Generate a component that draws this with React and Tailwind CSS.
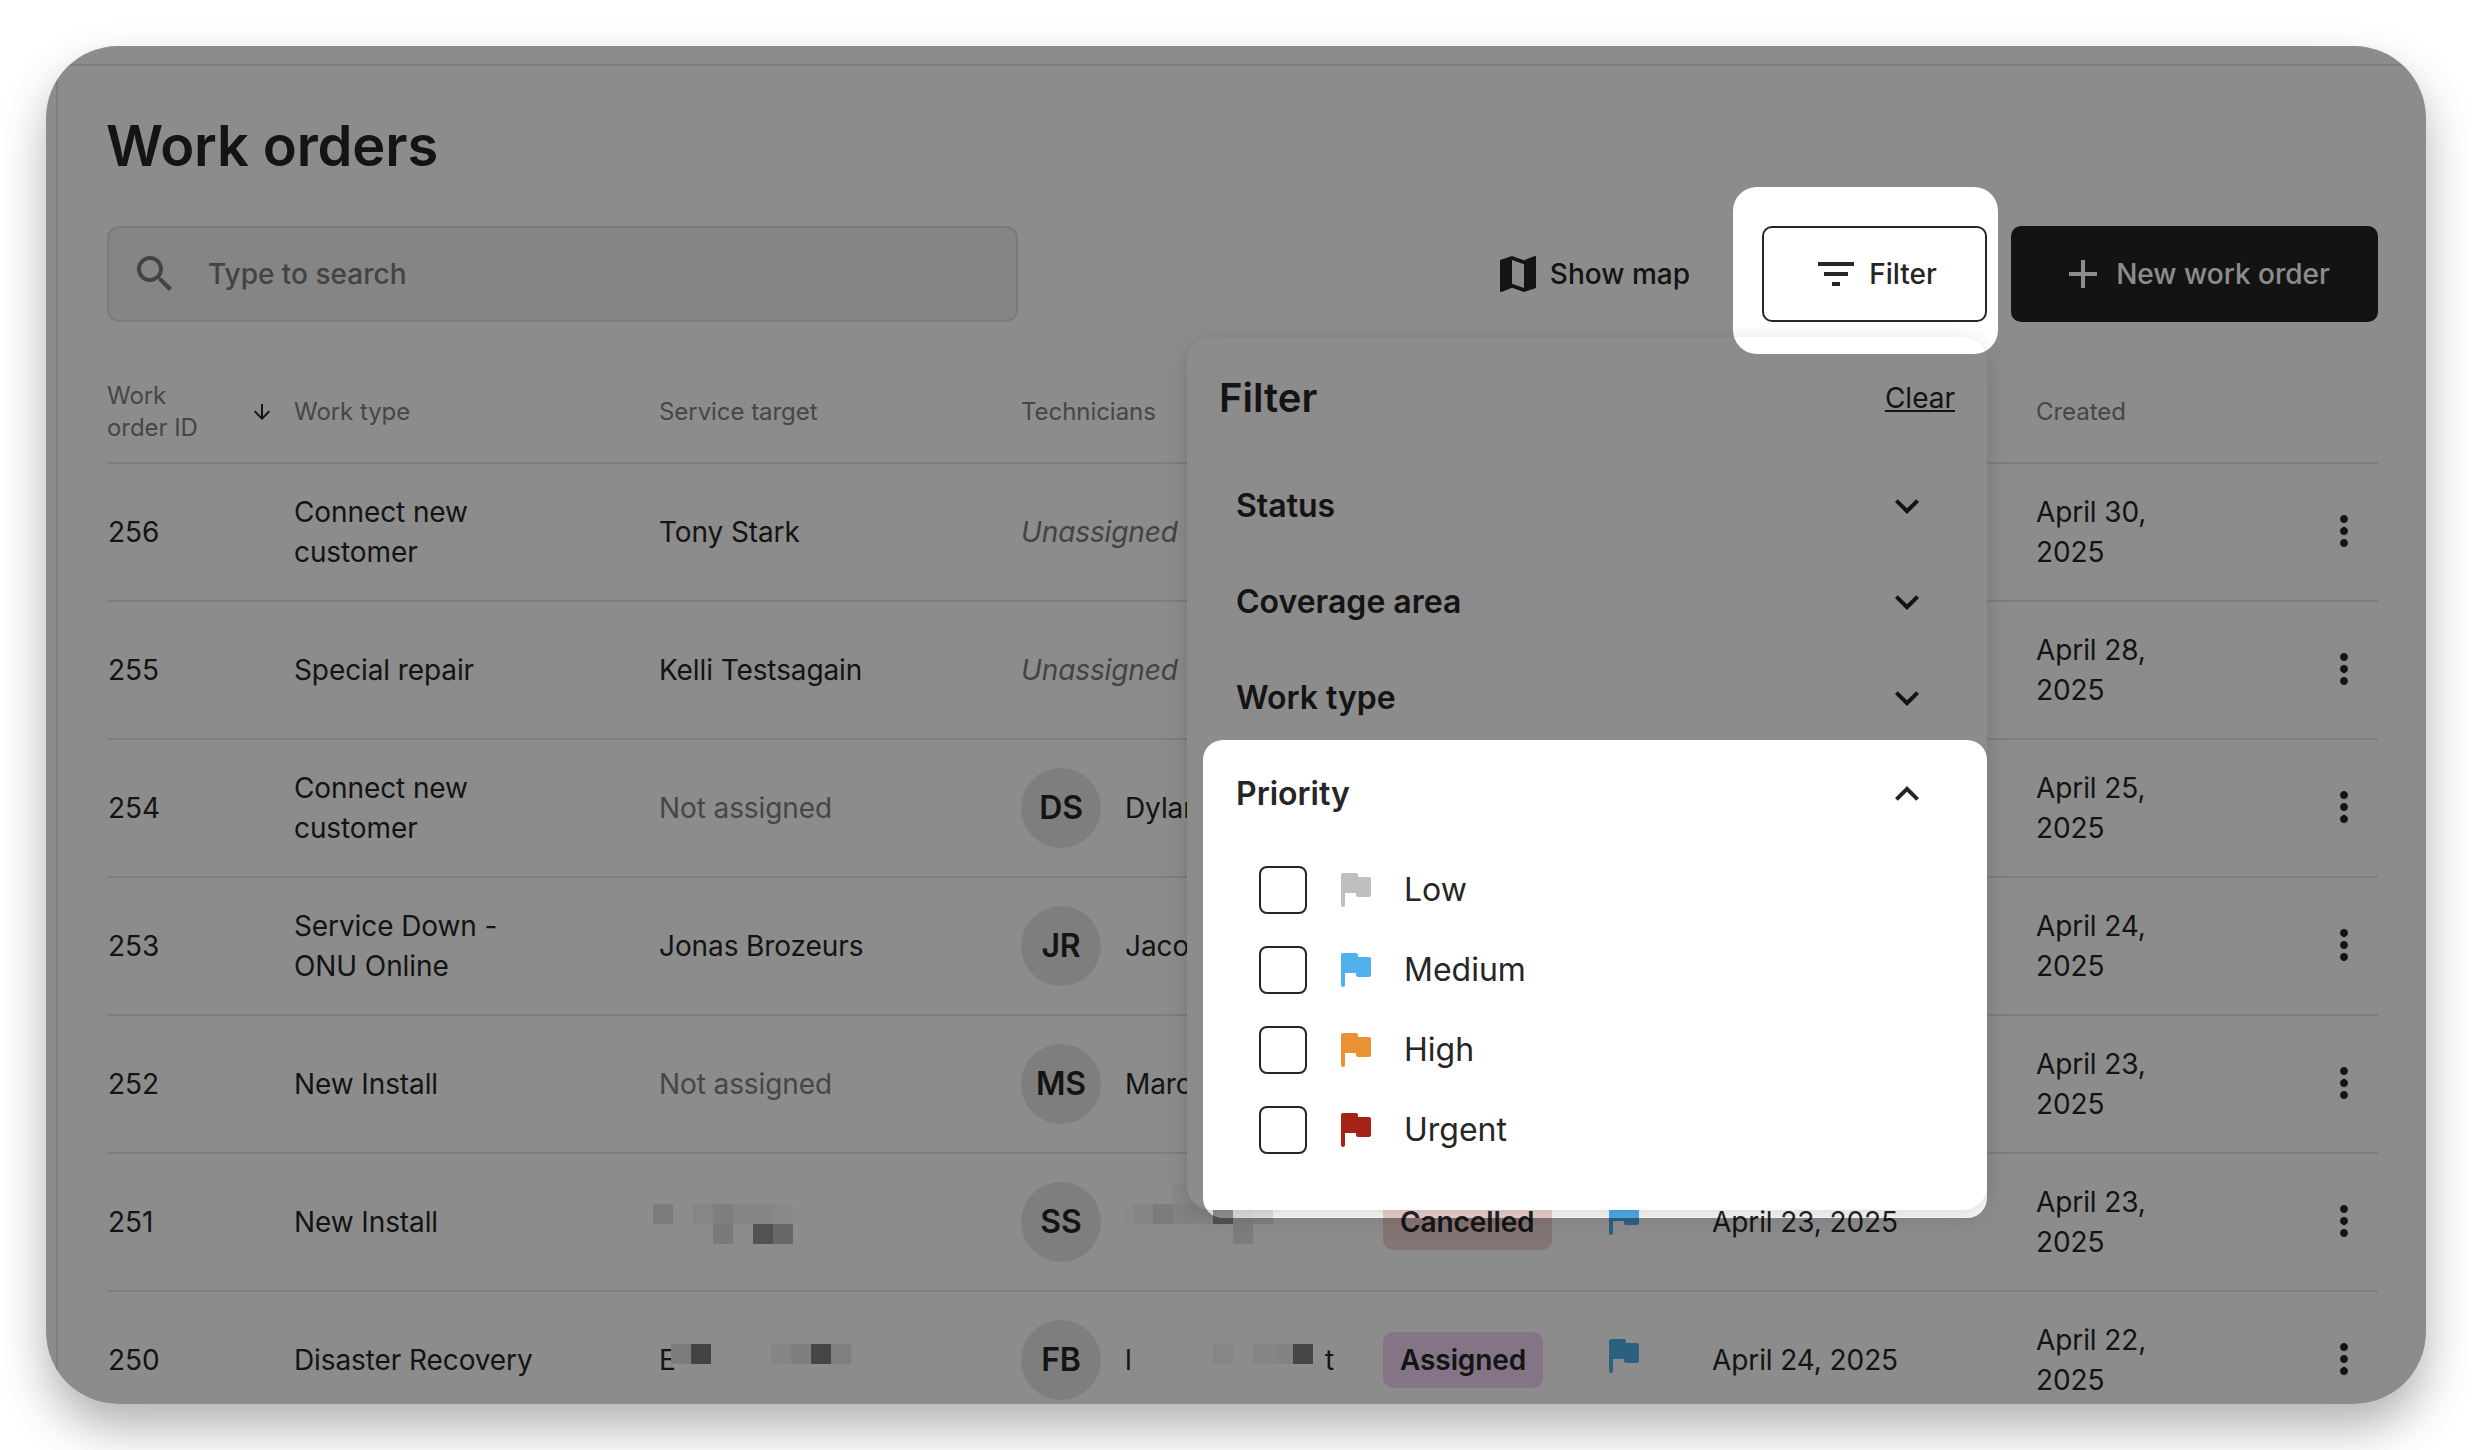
const ink = 'text-[#262626]';

function Icon({ d, size = 48, className = '' }) {
  return (
    <svg viewBox="0 0 24 24" width={size} height={size} className={`shrink-0 fill-current ${className}`}>
      <path fillRule="evenodd" d={d} />
    </svg>
  );
}

const paths = {
  search: 'M15.5 14h-.79l-.28-.27C15.41 12.59 16 11.11 16 9.5 16 5.91 13.09 3 9.5 3S3 5.91 3 9.5 5.91 16 9.5 16c1.61 0 3.09-.59 4.23-1.57l.27.28v.79l5 4.99L20.49 19l-4.99-5zm-6 0C7.01 14 5 11.99 5 9.5S7.01 5 9.5 5 14 7.01 14 9.5 11.99 14 9.5 14z',
  map: 'M20.5 3l-.16.03L15 5.1 9 3 3.36 4.9c-.21.07-.36.25-.36.48V20.5c0 .28.22.5.5.5l.16-.03L9 18.9l6 2.1 5.64-1.9c.21-.07.36-.25.36-.48V3.5c0-.28-.22-.5-.5-.5zM15 19l-6-2.11V5l6 2.11V19z',
  filter: 'M10 18h4v-2h-4v2zM3 6v2h18V6H3zm3 7h12v-2H6v2z',
  add: 'M19 13h-6v6h-2v-6H5v-2h6V5h2v6h6v2z',
  more: 'M12 8c1.1 0 2-.9 2-2s-.9-2-2-2-2 .9-2 2 .9 2 2 2zm0 2c-1.1 0-2 .9-2 2s.9 2 2 2 2-.9 2-2-.9-2-2-2zm0 6c-1.1 0-2 .9-2 2s.9 2 2 2 2-.9 2-2-.9-2-2-2z',
  down: 'M16.59 8.59 12 13.17 7.41 8.59 6 10l6 6 6-6z',
  up: 'M12 8l-6 6 1.41 1.41L12 10.83l4.59 4.58L18 14z',
  arrow: 'M20 12l-1.41-1.41L13 16.17V4h-2v12.17l-5.58-5.59L4 12l8 8 8-8z',
};

function Flag({ className }) {
  return (
    <svg viewBox="0 0 30 34" width="30" height="34" className={`shrink-0 fill-current ${className}`}>
      <path d="M2 0H15a2 2 0 0 1 2 2V4H28a2 2 0 0 1 2 2V22a2 2 0 0 1-2 2H17a2 2 0 0 1-2-2V20H4V32a2 2 0 0 1-4 0V2a2 2 0 0 1 2-2z" />
    </svg>
  );
}

// pixelated (redacted) names, each block is [x, y, colour]
function Mosaic({ blocks, width, height, className }) {
  return (
    <svg width={width} height={height} className={className} shapeRendering="crispEdges">
      {blocks.map(([x, y, c]) => (
        <rect key={`${x}-${y}`} x={x} y={y} width="20" height="20" fill={c} />
      ))}
    </svg>
  );
}

const targetMosaic251 = [
  [0, 20, '#e2e2e2'], [40, 20, '#f5f5f5'], [60, 20, '#e6e6e6'], [80, 20, '#f3f3f3'], [100, 20, '#f3f3f3'], [120, 20, '#fafafa'],
  [60, 40, '#dfdfdf'], [100, 40, '#959595'], [120, 40, '#bdbdbd'],
];
const techMosaic251 = [
  [52, 0, '#f8f8f8'],
  [0, 20, '#fbfbfb'], [12, 20, '#f3f3f3'], [32, 20, '#e1e1e1'], [52, 20, '#eeeeee'], [72, 20, '#f2f2f2'], [92, 20, '#959595'], [112, 20, '#e4e4e4'], [132, 20, '#e8e8e8'],
  [112, 40, '#e4e4e4'],
];
const targetMosaic250 = [
  [0, 0, '#e2e2e2'], [20, 0, '#7d7d7d'], [100, 0, '#f2f2f2'], [120, 0, '#e6e6e6'], [140, 0, '#808080'], [160, 0, '#e8e8e8'],
];
const techMosaic250 = [
  [86, 0, '#f4f4f4'], [126, 0, '#f2f2f2'], [146, 0, '#efefef'], [166, 0, '#808080'],
];

function Avatar({ initials, name, children }) {
  return (
    <div className="flex items-center gap-[24px]">
      <div className="flex h-[80px] w-[80px] shrink-0 items-center justify-center rounded-full bg-[#e6e6e6] text-[32px] font-semibold">
        {initials}
      </div>
      {name ? <span>{name}</span> : children}
    </div>
  );
}

function Badge({ className, children }) {
  return <span className={`inline-flex h-[56px] items-center rounded-[10px] px-[17px] font-semibold ${className}`}>{children}</span>;
}

const rows = [
  { id: 256, type: 'Connect new customer', target: 'Tony Stark', tech: <span className="italic text-[#7a7a7a]">Unassigned</span>, created: 'April 30, 2025' },
  { id: 255, type: 'Special repair', target: 'Kelli Testsagain', tech: <span className="italic text-[#7a7a7a]">Unassigned</span>, created: 'April 28, 2025' },
  { id: 254, type: 'Connect new customer', target: <span className="text-[#808080]">Not assigned</span>, tech: <Avatar initials="DS" name="Dylan" />, created: 'April 25, 2025' },
  { id: 253, type: 'Service Down - ONU Online', target: 'Jonas Brozeurs', tech: <Avatar initials="JR" name="Jacob" />, created: 'April 24, 2025' },
  { id: 252, type: 'New Install', target: <span className="text-[#808080]">Not assigned</span>, tech: <Avatar initials="MS" name="Marc" />, created: 'April 23, 2025' },
  {
    id: 251,
    type: 'New Install',
    target: <Mosaic blocks={targetMosaic251} width={140} height={60} className="-ml-[6px] -mt-[16px]" />,
    tech: <Avatar initials="SS"><Mosaic blocks={techMosaic251} width={160} height={60} className="-ml-[4px] -mt-[16px]" /></Avatar>,
    status: <Badge className="bg-[#f0d6d3]">Cancelled</Badge>,
    flag: true,
    due: 'April 23, 2025',
    created: 'April 23, 2025',
  },
  {
    id: 250,
    type: 'Disaster Recovery',
    target: (
      <div className="relative">
        E
        <Mosaic blocks={targetMosaic250} width={180} height={20} className="absolute left-[12px] top-[4px]" />
      </div>
    ),
    tech: (
      <Avatar initials="FB">
        <div className="relative w-[205px]">
          l
          <Mosaic blocks={techMosaic250} width={190} height={20} className="absolute left-[2px] top-[4px]" />
          <span className="absolute left-[200px] top-0">t</span>
        </div>
      </Avatar>
    ),
    status: <Badge className="bg-[#f0d3f5]">Assigned</Badge>,
    flag: true,
    due: 'April 24, 2025',
    created: 'April 22, 2025',
  },
];

const cols = 'grid grid-cols-[187px_365px_362px_362px_226px_103px_324px_1fr] items-center';

function AccordionRow({ label, open }) {
  return (
    <div className="flex h-[96px] items-center justify-between pl-[49px] pr-[56px] text-[32px] font-semibold">
      {label}
      <Icon d={open ? paths.up : paths.down} />
    </div>
  );
}

function PriorityOption({ label, color }) {
  return (
    <div className="flex h-[48px] items-center gap-[34px]">
      <div className="h-[48px] w-[48px] rounded-[8px] border-2 border-[#262626]" />
      <Flag className={color} />
      <span className="-ml-[1px] text-[32px]">{label}</span>
    </div>
  );
}

export default function App() {
  return (
    <div className={`h-[1450px] overflow-hidden bg-white p-[46px] font-['Inter',sans-serif] ${ink}`}>
      <div className="relative h-[1358px] w-[2380px] rounded-[72px] shadow-[0_24px_48px_rgba(0,0,0,0.3)]">
        <div className="relative h-full overflow-hidden rounded-[72px] bg-white">
          <div className="ml-[10px] mt-[18px] h-full border-l-2 border-t-2 border-[#e6e6e6] pl-[49px] pr-[48px] pt-[48px] text-[28px]">
            <h1 className="-ml-[1px] h-[64px] text-[56px] font-semibold leading-[64px] tracking-[-0.15px]">Work orders</h1>

            {/* Toolbar */}
            <div className="mt-[48px] flex h-[96px] items-stretch">
              <div className="flex w-[911px] items-center rounded-[12px] border-2 border-[#e0e0e0] bg-[#f2f2f2] pl-[22px]">
                <Icon d={paths.search} className="text-[#7a7a7a]" />
                <input placeholder="Type to search" className="ml-[29px] flex-1 bg-transparent font-medium outline-none placeholder:text-[#7a7a7a]" />
              </div>
              <div className="ml-auto flex items-center gap-[8px] font-medium">
                <Icon d={paths.map} />
                Show map
              </div>
              <button className="ml-[72px] flex w-[225px] items-center justify-center gap-[9px] rounded-[10px] border-2 border-[#262626] bg-white font-medium">
                <Icon d={paths.filter} />
                Filter
              </button>
              <button className="ml-[24px] flex w-[367px] items-center justify-center gap-[9px] rounded-[10px] bg-[#242424] font-medium text-white">
                <Icon d={paths.add} />
                New work order
              </button>
            </div>

            {/* Table */}
            <div className={`${cols} mt-[40px] h-[102px] border-b-2 border-[#e6e6e6] text-[24px] leading-[32px] tracking-[-0.05px] text-[#808080]`}>
              <div className="flex items-center justify-between pr-[20px]">
                <span className="w-[100px]">Work order ID</span>
                <Icon d={paths.arrow} size={24} className={ink} />
              </div>
              <div>Work type</div>
              <div>Service target</div>
              <div>Technicians</div>
              <div />
              <div />
              <div />
              <div>Created</div>
            </div>
            {rows.map((row) => (
              <div key={row.id} className={`${cols} h-[138px] border-b-2 border-[#e6e6e6] leading-[40px] tracking-[-0.1px]`}>
                <div className="ml-[1px]">{row.id}</div>
                <div className="w-[270px]">{row.type}</div>
                <div>{row.target}</div>
                <div>{row.tech}</div>
                <div>{row.status}</div>
                <div className="-mt-[8px]">{row.flag && <Flag className="text-[#50b0ec]" />}</div>
                <div>{row.due}</div>
                <div className="flex items-center justify-between pr-[10px]">
                  <span className="w-[120px]">{row.created}</span>
                  <Icon d={paths.more} className="-mt-[2px]" />
                </div>
              </div>
            ))}
          </div>

          {/* Filter popover */}
          <div className="absolute left-[1141px] top-[291px] h-[873px] w-[800px] rounded-[24px] bg-white shadow-[0_6px_24px_rgba(0,0,0,0.16)]">
            <div className="flex h-[121px] items-center justify-between pl-[32px] pr-[32px]">
              <span className="text-[40px] font-semibold">Filter</span>
              <span className="text-[28px] underline">Clear</span>
            </div>
            <AccordionRow label="Status" />
            <AccordionRow label="Coverage area" />
            <AccordionRow label="Work type" />
            <AccordionRow label="Priority" open />
            <div className="mt-[24px] flex flex-col gap-[32px] pl-[72px]">
              <PriorityOption label="Low" color="text-[#bfbfbf]" />
              <PriorityOption label="Medium" color="text-[#50b0ec]" />
              <PriorityOption label="High" color="text-[#e99235]" />
              <PriorityOption label="Urgent" color="text-[#a52217]" />
            </div>
          </div>

          {/* Dimming layer with the two highlighted holes */}
          <div className="absolute inset-0 bg-black/45 [clip-path:path(evenodd,'M0_0H2380V1358H0ZM1711_141H1928a24_24_0_0_1_24_24V284a24_24_0_0_1-24_24H1711a24_24_0_0_1-24-24V165a24_24_0_0_1_24-24ZM1177_694H1921a20_20_0_0_1_20_20V1152a20_20_0_0_1-20_20H1177a20_20_0_0_1-20-20V714a20_20_0_0_1_20-20Z')]" />
        </div>
      </div>
    </div>
  );
}
